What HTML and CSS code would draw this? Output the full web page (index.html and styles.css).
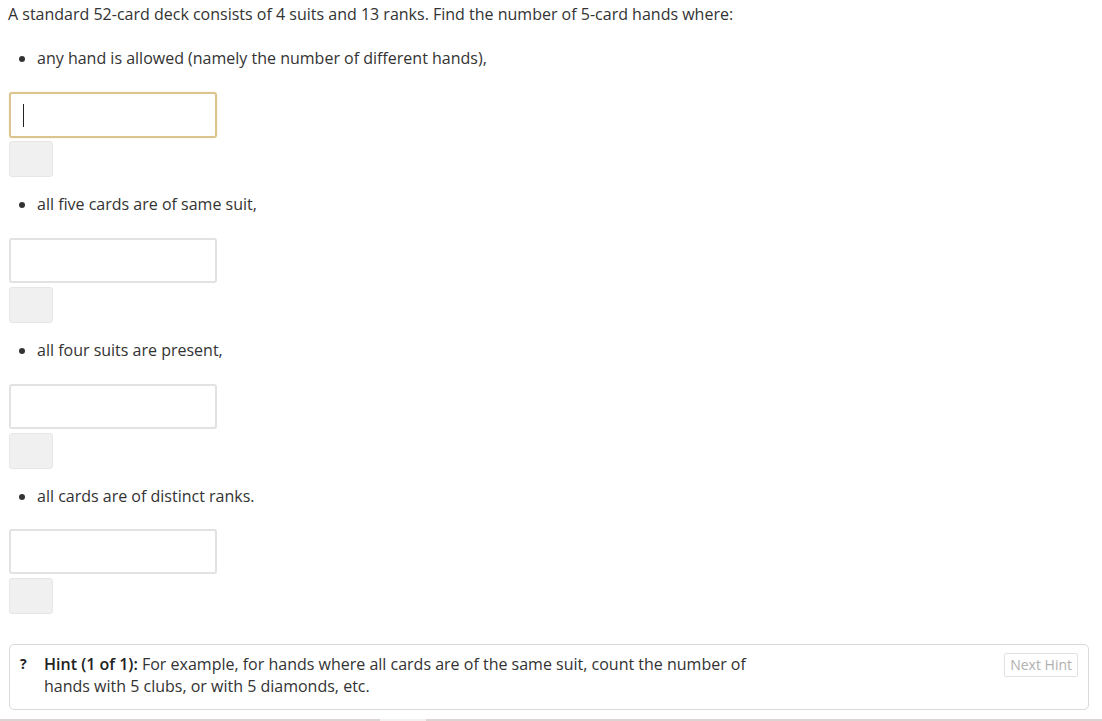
FILE: index.html
```html
<!DOCTYPE html>
<html>
<head>
<meta charset="utf-8">
<link rel="stylesheet" href="styles.css">
</head>
<body>
<div class="page">
  <p class="intro">A standard 52-card deck consists of 4 suits and 13 ranks. Find the number of 5-card hands where:</p>

  <div class="item">
    <ul class="bul"><li>any hand is allowed (namely the number of different hands),</li></ul>
    <div class="answer focused"><span class="caret"></span></div>
    <div class="check"></div>
  </div>

  <div class="item">
    <ul class="bul"><li>all five cards are of same suit,</li></ul>
    <div class="answer"></div>
    <div class="check"></div>
  </div>

  <div class="item">
    <ul class="bul"><li>all four suits are present,</li></ul>
    <div class="answer"></div>
    <div class="check"></div>
  </div>

  <div class="item">
    <ul class="bul"><li>all cards are of distinct ranks.</li></ul>
    <div class="answer"></div>
    <div class="check"></div>
  </div>

  <div class="hint">
    <span class="q">?</span>
    <div class="hint-text"><b>Hint (1 of 1):</b> For example, for hands where all cards are of the same suit, count the number of<br>hands with 5 clubs, or with 5 diamonds, etc.</div>
    <span class="next">Next Hint</span>
  </div>
  <div class="strip"><span class="gap"></span></div>
</div>
</body>
</html>
```
FILE: styles.css
```css
html, body {
  margin: 0;
  padding: 0;
  background: #fff;
}
body {
  font-family: "Open Sans", "Liberation Sans", sans-serif;
  font-size: 16px;
  line-height: 22px;
  color: #333;
}
.page {
  padding: 3px 0 0 0;
}
.intro {
  margin: 0 0 0 8px;
}
.item {
  padding-left: 9px;
}
.bul {
  margin: 22px 0 0 0;
  padding: 0 0 0 28px;
  list-style: disc;
}
.item + .item .bul {
  margin-top: 16.4px;
}
.answer {
  box-sizing: border-box;
  width: 208px;
  height: 45px;
  margin-top: 22.4px;
  border: 2px solid #e2e2e2;
  border-radius: 3px;
  background: #fff;
  position: relative;
}
.answer.focused {
  border-color: #dbc48e;
  box-shadow: 0 0 2px #f3e6d0;
  height: 46px;
  margin-top: 23px;
}
.caret {
  position: absolute;
  left: 12px;
  top: 10px;
  width: 1px;
  height: 23px;
  background: #222;
}
.check {
  box-sizing: border-box;
  width: 44px;
  height: 36px;
  margin-top: 4px;
  background: #f0f0f0;
  border: 1px solid #e6e6e6;
  border-radius: 3px;
}
.focused + .check {
  margin-top: 3px;
}
.hint {
  box-sizing: border-box;
  margin: 30px 0 0 9px;
  width: 1080px;
  height: 66px;
  border: 1px solid #d9d9d9;
  border-radius: 5px;
  padding: 8px 10px 0 10px;
  display: flex;
  align-items: flex-start;
}
.q {
  width: 24px;
  font-weight: 700;
  font-size: 14px;
  color: #222;
}
.hint-text {
  flex: 1;
}
.hint-text b {
  font-weight: 600;
  color: #222;
}
.next {
  margin-top: 0;
  border: 1px solid #e2e2e2;
  border-radius: 2px;
  font-size: 14px;
  line-height: 22px;
  padding: 0 5px;
  color: #b0b0b0;
}
.strip {
  margin-top: 9px;
  height: 3px;
  background: #dcd3d3;
  position: relative;
}
.gap {
  position: absolute;
  left: 380px;
  width: 46px;
  top: 0;
  bottom: 0;
  background: #f4f0f0;
}
```
